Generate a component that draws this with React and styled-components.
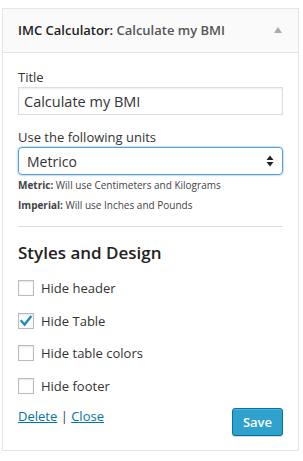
import React from "react";
import styled, { createGlobalStyle } from "styled-components";

const Global = createGlobalStyle`
  html, body { margin: 0; padding: 0; background: #fff; }
  body { font-family: "Open Sans", "Liberation Sans", sans-serif; color: #444; }
  * { box-sizing: border-box; }
`;

const Widget = styled.div`
  margin: 8px 0 0 2px;
  width: 297px;
  border: 1px solid #e5e5e5;
  box-shadow: 0 1px 1px rgba(0,0,0,0.04);
  background: #fff;
`;

const Top = styled.div`
  display: flex;
  align-items: center;
  justify-content: space-between;
  height: 44px;
  padding: 0 16px 0 15px;
  background: #fafafa;
  border-bottom: 1px solid #e5e5e5;
`;

const TopTitle = styled.h4`
  margin: 0;
  font-size: 13px;
  font-weight: 600;
  line-height: 1;
  color: #222;
`;

const InTitle = styled.span`
  color: #555;
  font-weight: 600;
`;

const Arrow = styled.span`
  width: 0;
  height: 0;
  margin-top: -2px;
  border-left: 4px solid transparent;
  border-right: 4px solid transparent;
  border-bottom: 6px solid #aaa;
`;

const Inside = styled.div`
  padding: 16px 15px 14px 15px;
`;

const Label = styled.label`
  display: block;
  font-size: 13px;
  line-height: 16px;
  color: #333;
  margin-bottom: 2px;
`;

const Field = styled.div`
  margin-bottom: ${p => p.$mb || 0}px;
`;

const TextInput = styled.input`
  display: block;
  width: 100%;
  height: 28px;
  padding: 3px 5px;
  border: 1px solid #ddd;
  border-radius: 0;
  box-shadow: inset 0 1px 2px rgba(0,0,0,0.07);
  font-family: "Open Sans", "Liberation Sans", sans-serif;
  font-size: 14.5px;
  color: #333;
  outline: none;
`;

const SelectBox = styled.div`
  display: flex;
  align-items: center;
  justify-content: space-between;
  height: 28px;
  padding: 0 8px 0 8px;
  border: 1px solid #5b9dd9;
  border-radius: 4px;
  box-shadow: 0 0 2px rgba(30,140,190,0.8);
  font-size: 14px;
  color: #333;
`;

const Help = styled.p`
  margin: ${p => p.$mt}px 0 0;
  font-size: 10px;
  line-height: 14px;
  color: #444;
  & b { font-weight: 700; }
`;

const Rule = styled.hr`
  border: 0;
  border-top: 1px solid #ddd;
  margin: 14px 0 14px;
`;

const Heading = styled.h3`
  margin: 0 0 7px;
  font-size: 17px;
  font-weight: 600;
  line-height: 24px;
  color: #222;
`;

const CheckRow = styled.label`
  display: flex;
  align-items: center;
  gap: 7px;
  height: 32.6px;
  font-size: 13px;
  color: #333;
`;

const Box = styled.span`
  display: inline-flex;
  align-items: center;
  justify-content: center;
  width: 16px;
  height: 16px;
  border: 1px solid #bbb;
  background: #fff;
  box-shadow: inset 0 1px 2px rgba(0,0,0,0.1);
`;

const Footer = styled.div`
  display: flex;
  justify-content: space-between;
  align-items: flex-start;
  margin-top: 5px;
`;

const Links = styled.div`
  font-size: 13px;
  line-height: 18px;
  color: #444;
  & a { color: #0074a2; text-decoration: underline; }
`;

const SaveButton = styled.button`
  height: 28px;
  padding: 0 10px;
  margin-top: 1px;
  border: 1px solid #0074a2;
  border-radius: 3px;
  background: #2ea2cc;
  color: #fff;
  font-family: "Open Sans", "Liberation Sans", sans-serif;
  font-size: 13px;
  font-weight: 600;
  box-shadow: inset 0 1px 0 rgba(120,200,230,0.5), 0 1px 0 rgba(0,0,0,0.15);
`;

const Check = () => (
  <svg width="14" height="14" viewBox="0 0 14 14">
    <path d="M2.5 7.2 L5.6 10.6 L11.6 3" fill="none" stroke="#1e8cbe" strokeWidth="2.4" strokeLinecap="square" />
  </svg>
);

const Updown = () => (
  <svg width="8" height="12" viewBox="0 0 8 12">
    <path d="M4 0.5 L7.5 5 L0.5 5 Z" fill="#222" />
    <path d="M4 11.5 L7.5 7 L0.5 7 Z" fill="#222" />
  </svg>
);

const options = [
  { label: "Hide header", checked: false },
  { label: "Hide Table", checked: true },
  { label: "Hide table colors", checked: false },
  { label: "Hide footer", checked: false },
];

export default function App() {
  return (
    <>
      <Global />
      <Widget>
        <Top>
          <TopTitle>IMC Calculator: <InTitle>Calculate my BMI</InTitle></TopTitle>
          <Arrow />
        </Top>
        <Inside>
          <Field $mb={14}>
            <Label>Title</Label>
            <TextInput defaultValue="Calculate my BMI" />
          </Field>
          <Field>
            <Label>Use the following units</Label>
            <SelectBox>
              <span>Metrico</span>
              <Updown />
            </SelectBox>
          </Field>
          <Help $mt={3}><b>Metric:</b> Will use Centimeters and Kilograms</Help>
          <Help $mt={6}><b>Imperial:</b> Will use Inches and Pounds</Help>
          <Rule />
          <Heading>Styles and Design</Heading>
          {options.map(o => (
            <CheckRow key={o.label}>
              <Box>{o.checked && <Check />}</Box>
              {o.label}
            </CheckRow>
          ))}
          <Footer>
            <Links><a href="#">Delete</a> | <a href="#">Close</a></Links>
            <SaveButton>Save</SaveButton>
          </Footer>
        </Inside>
      </Widget>
    </>
  );
}
